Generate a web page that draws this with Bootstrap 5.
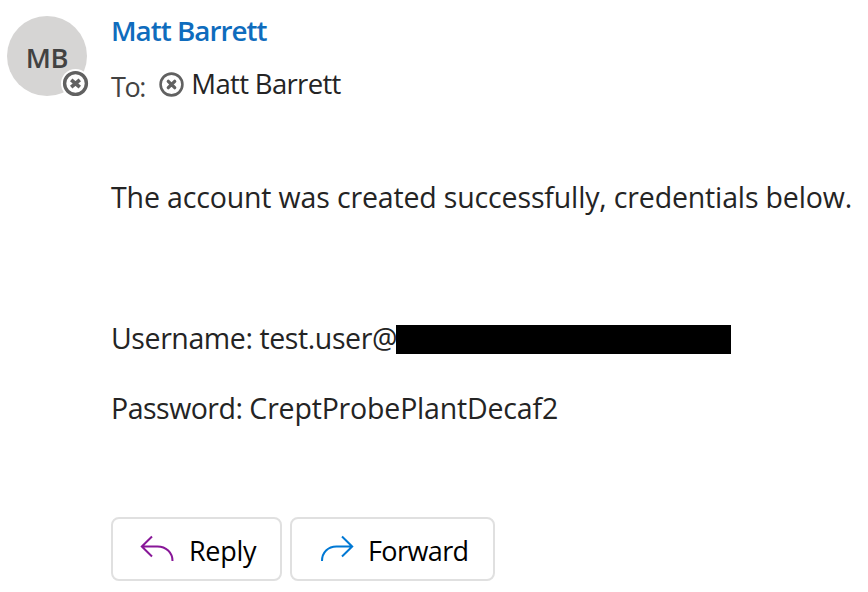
<!DOCTYPE html>
<html lang="en">
<head>
<meta charset="utf-8">
<meta name="viewport" content="width=device-width, initial-scale=1">
<title>Account created</title>
<link href="https://cdn.jsdelivr.net/npm/bootstrap@5.3.0/dist/css/bootstrap.min.css" rel="stylesheet">
<style>
body { font-family: "Open Sans", "Noto Sans", sans-serif; font-size: 28.5px; line-height: 40px; color: #242424; background: #fff; overflow: hidden; }
.message { padding: 10px 0 0 7px; }
.avatar { width: 80px; height: 80px; margin-top: 6px; margin-right: 24px; background: #d6d5d4; color: #424242; font-size: 27.3px; font-weight: 600; }
.initials { padding-top: 4px; letter-spacing: -.2px; }
.presence { right: -3px; bottom: -2px; width: 29px; height: 29px; }
.sender { color: #0f6cbd; font-size: 27.8px; font-weight: 600; letter-spacing: -1px; }
.recipients { margin-top: 14px; }
.to-label { color: #424242; font-size: 27px; letter-spacing: -1.4px; padding-top: 3px; width: 48px; }
.recipient { font-size: 27.5px; letter-spacing: -.66px; margin-left: -.7px; }
.status { width: 25px; height: 25px; margin: 8px 8px 0 0; }
.line { white-space: nowrap; height: 40px; }
.intro { margin-top: 73px; letter-spacing: -.15px; }
.user { margin-top: 101px; }
.username { letter-spacing: -.41px; width: 285px; }
.pass { margin-top: 30px; letter-spacing: -.28px; }
.pass-label { letter-spacing: -.5px; }
.pass-value { letter-spacing: -.18px; }
.redacted { width: 335px; height: 29px; margin-top: 7px; background: #000; }
.actions { margin-top: 89px; gap: 8px; }
.action { height: 64px; border: 2px solid #e0e0e0; border-radius: 8px; color: #000; font-size: 27px; line-height: 40px; padding: 4px 0 0 27px; }
.action:hover { border-color: #c7c7c7; }
.action svg { width: 36px; height: 30px; margin-right: 13px; margin-top: -4px; }
.reply { width: 171px; padding-left: 25px; }
.reply svg { margin-right: 15px; }
.forward { width: 205px; }
.reply-text { letter-spacing: -.3px; }
.forward-text { letter-spacing: -.6px; }
</style>
</head>
<body>
<main class="message d-flex align-items-start">
  <div class="avatar position-relative rounded-circle flex-shrink-0 d-flex align-items-center justify-content-center">
    <span class="initials">MB</span>
    <svg class="presence position-absolute" viewBox="0 0 29 29" aria-hidden="true"><circle cx="14.5" cy="14.5" r="14.5" fill="#fff"/><circle cx="14.5" cy="14.5" r="10.9" fill="none" stroke="#616161" stroke-width="3.4"/><path d="M10.2 10.8l8.6 7.4M18.8 10.8l-8.6 7.4" stroke="#616161" stroke-width="3.7"/></svg>
  </div>
  <div class="flex-shrink-0">
    <div class="sender line">Matt Barrett</div>
    <div class="recipients d-flex line">
      <span class="to-label">To:</span>
      <svg class="status" viewBox="0 0 25 25" aria-hidden="true"><circle cx="12.5" cy="12.5" r="10.9" fill="none" stroke="#616161" stroke-width="2.6"/><path d="M9.3 9.3l6.4 6.4M15.7 9.3l-6.4 6.4" stroke="#616161" stroke-width="3.3" stroke-linecap="round"/></svg>
      <span class="recipient">Matt Barrett</span>
    </div>
    <p class="intro line mb-0">The account was created successfully, credentials below.</p>
    <div class="user line d-flex"><span class="username">Username: test.user@</span><span class="redacted"></span></div>
    <p class="pass line mb-0"><span class="pass-label">Password: </span><span class="pass-value">CreptProbePlantDecaf2</span></p>
    <div class="actions d-flex">
      <button type="button" class="btn action reply d-flex align-items-center"><svg viewBox="0 0 36 30" fill="none" stroke="#881798" stroke-width="2" aria-hidden="true"><path d="M14 2.5L3.8 12.5L14 22.5M4 12.5H19.5C28 12.5 34.5 18.5 34.5 27"/></svg><span class="reply-text">Reply</span></button>
      <button type="button" class="btn action forward d-flex align-items-center"><svg viewBox="0 0 36 30" fill="none" stroke="#0078d4" stroke-width="2" aria-hidden="true"><path d="M23 2.5L33.2 12.5L23 22.5M33 12.5H17.5C9 12.5 3 18.5 3 27"/></svg><span class="forward-text">Forward</span></button>
    </div>
  </div>
</main>
<script src="https://cdn.jsdelivr.net/npm/bootstrap@5.3.0/dist/js/bootstrap.bundle.min.js"></script>
</body>
</html>
